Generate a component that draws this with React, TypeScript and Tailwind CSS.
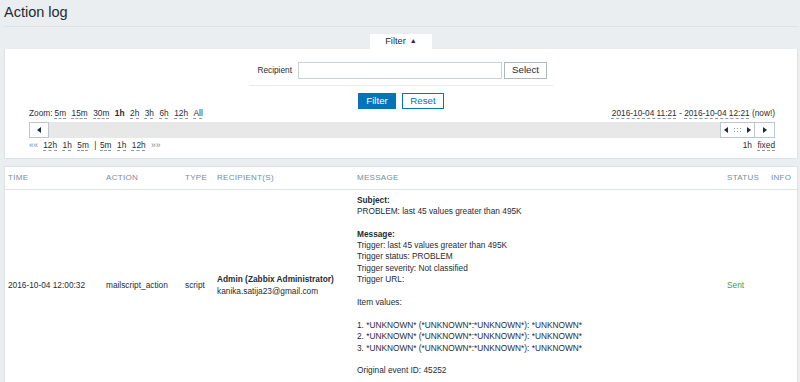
import type { ReactNode } from "react";

function Dash({ children }: { children: ReactNode }) {
  return (
    <span className="underline decoration-dashed decoration-[#8a9ba5] underline-offset-[2px]">
      {children}
    </span>
  );
}

function Tri({ dir }: { dir: "left" | "right" }) {
  return (
    <svg width="4" height="6" viewBox="0 0 4 6" className="block">
      {dir === "left" ? (
        <polygon points="4,0 4,6 0,3" fill="#1f2c33" />
      ) : (
        <polygon points="0,0 0,6 4,3" fill="#1f2c33" />
      )}
    </svg>
  );
}

function Grip() {
  return (
    <svg width="7" height="4" viewBox="0 0 7 4" className="block">
      {[0, 3, 6].map((x) =>
        [0, 3].map((y) => <rect key={`${x}-${y}`} x={x} y={y} width="1" height="1" fill="#8f9ea6" />)
      )}
    </svg>
  );
}

const messageLines = [
  { t: "Subject:", b: true },
  { t: "PROBLEM: last 45 values greater than 495K" },
  { t: "" },
  { t: "Message:", b: true },
  { t: "Trigger: last 45 values greater than 495K" },
  { t: "Trigger status: PROBLEM" },
  { t: "Trigger severity: Not classified" },
  { t: "Trigger URL:" },
  { t: "" },
  { t: "Item values:" },
  { t: "" },
  { t: "1. *UNKNOWN* (*UNKNOWN*:*UNKNOWN*): *UNKNOWN*" },
  { t: "2. *UNKNOWN* (*UNKNOWN*:*UNKNOWN*): *UNKNOWN*" },
  { t: "3. *UNKNOWN* (*UNKNOWN*:*UNKNOWN*): *UNKNOWN*" },
  { t: "" },
  { t: "Original event ID: 45252" },
];

export default function App() {
  return (
    <div className="min-h-screen overflow-hidden bg-[#ebeef0] font-['Liberation_Sans',Arial,sans-serif] text-[8.3px] text-[#1f2c33]">
      {/* page title */}
      <header className="ml-1 mr-[2px] flex h-[27px] items-center border-b border-[#dde2e5] pb-[1px]">
        <h1 className="text-[14.5px] leading-none">Action log</h1>
      </header>

      {/* filter */}
      <div className="ml-1 mr-[2px] mt-[7px]">
        <div className="flex justify-center">
          <div className="flex h-[15px] w-[62px] items-center justify-center gap-[4px] bg-white text-[9.3px]">
            <span>Filter</span>
            <span className="text-[7px]">▲</span>
          </div>
        </div>
        <div className="h-[110px] border border-t-0 border-[#dde2e5] bg-white">
          <div className="mx-auto w-[304px] border-b border-[#e8ecee] pb-[6px] pt-[13px]">
            <div className="flex h-[17px] items-center">
              <label className="flex-1 pr-[6px] text-right">Recipient</label>
              <div className="h-[17px] w-[204px] border border-[#c9d1d5] bg-white" />
              <button className="ml-[2px] mr-[6px] h-[17px] w-[43px] border border-[#acbbc2] bg-white text-[9.7px] text-[#1f2c33]">
                Select
              </button>
            </div>
          </div>
          <div className="mt-[7px] flex justify-center gap-[6px]">
            <button className="h-[16px] w-[38px] border border-[#0275b8] bg-[#0275b8] text-[9.7px] leading-none text-white">
              Filter
            </button>
            <button className="h-[16px] w-[42px] border border-[#0275b8] bg-white text-[9.7px] leading-none text-[#0275b8]">
              Reset
            </button>
          </div>

          <div className="ml-[24px] mr-[22px]">
            <div className="flex h-[9px] items-center justify-between leading-[9px]">
              <div className="flex gap-[5.5px]">
                <span className="mr-[-3.5px]">Zoom:</span>
                <Dash>5m</Dash>
                <Dash>15m</Dash>
                <Dash>30m</Dash>
                <span className="font-bold">1h</span>
                <Dash>2h</Dash>
                <Dash>3h</Dash>
                <Dash>6h</Dash>
                <Dash>12h</Dash>
                <Dash>All</Dash>
              </div>
              <div>
                <Dash>2016-10-04 11:21</Dash> - <Dash>2016-10-04 12:21</Dash> (now!)
              </div>
            </div>

            <div className="mt-[4px] flex h-[16px] items-stretch justify-between bg-[#e8e8e8]">
              <button className="flex w-[20px] items-center justify-center border border-[#bcc6cb] bg-white">
                <Tri dir="left" />
              </button>
              <div className="flex">
                <div className="flex w-[35px] items-center justify-center gap-[6px] border border-[#bcc6cb] bg-white">
                  <Tri dir="left" />
                  <Grip />
                  <Tri dir="right" />
                </div>
                <button className="flex w-[20px] items-center justify-center border border-l-0 border-[#bcc6cb] bg-white">
                  <Tri dir="right" />
                </button>
              </div>
            </div>

            <div className="mt-[3px] flex h-[9px] items-center justify-between leading-[9px]">
              <div className="flex gap-[5.5px]">
                <span className="mr-[-0.5px] text-[#768d99]">««</span>
                <Dash>12h</Dash>
                <Dash>1h</Dash>
                <Dash>5m</Dash>
                <span className="mr-[-2px]">|</span>
                <Dash>5m</Dash>
                <Dash>1h</Dash>
                <Dash>12h</Dash>
                <span className="text-[#768d99]">»»</span>
              </div>
              <div className="flex gap-[5.5px]">
                <span>1h</span>
                <Dash>fixed</Dash>
              </div>
            </div>
          </div>
        </div>
      </div>

      {/* action log table */}
      <div className="ml-1 mr-[2px] mt-[7px] border border-b-0 border-[#dde2e5] bg-white">
        <table className="w-full table-fixed border-collapse">
          <colgroup>
            <col className="w-[98px]" />
            <col className="w-[79px]" />
            <col className="w-[32px]" />
            <col className="w-[140px]" />
            <col className="w-[370px]" />
            <col className="w-[44px]" />
            <col />
          </colgroup>
          <thead>
            <tr className="h-[22px] border-b border-[#dde2e5] text-left text-[8px] uppercase tracking-[0.3px] text-[#768d99]">
              <th className="px-[3px] font-normal">Time</th>
              <th className="px-[3px] font-normal">Action</th>
              <th className="px-[3px] font-normal">Type</th>
              <th className="px-[3px] font-normal">Recipient(s)</th>
              <th className="px-[3px] font-normal">Message</th>
              <th className="px-[3px] font-normal">Status</th>
              <th className="px-[3px] font-normal">Info</th>
            </tr>
          </thead>
          <tbody className="leading-[11.4px]">
            <tr>
              <td className="px-[3px] py-[5px] align-middle whitespace-nowrap">2016-10-04 12:00:32</td>
              <td className="px-[3px] py-[5px] align-middle">mailscript_action</td>
              <td className="px-[3px] py-[5px] align-middle">script</td>
              <td className="px-[3px] py-[5px] align-middle whitespace-nowrap">
                <div className="font-bold">Admin (Zabbix Administrator)</div>
                <div>kanika.satija23@gmail.com</div>
              </td>
              <td className="px-[3px] py-[5px] align-top">
                {messageLines.map((l, i) => (
                  <div key={i} className={l.b ? "h-[11.4px] font-bold" : "h-[11.4px]"}>
                    {l.t}
                  </div>
                ))}
              </td>
              <td className="px-[3px] py-[5px] align-middle text-[#429e47]">Sent</td>
              <td className="px-[3px] py-[5px] align-middle" />
            </tr>
          </tbody>
        </table>
      </div>
    </div>
  );
}
